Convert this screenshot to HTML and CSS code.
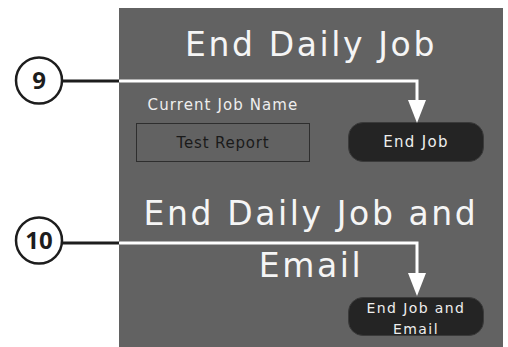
FILE: index.html
```html
<!DOCTYPE html>
<html>
<head>
    <title>End Daily Job</title>
    <link rel="stylesheet" href="styles.css">
</head>
<body>
    <div class="page">
        <div class="panel">
            <h2 class="title">End Daily Job</h2>
            <div class="row">
                <div class="field">
                    <label for="jobName">Current Job Name</label>
                    <div class="jobBox" id="jobName">Test Report</div>
                </div>
                <button class="endButton">End Job</button>
            </div>

            <h2 class="title titleEmail">End Daily Job and<br>Email</h2>
            <div class="row rowEmail">
                <button class="endButton endEmail">End Job and<br>Email</button>
            </div>
        </div>

        <!-- callouts drawn over the screen -->
        <svg class="callouts" width="508" height="347" viewBox="0 0 508 347">
            <g class="callout">
                <line x1="62" y1="81" x2="120" y2="81" class="leadDark" />
                <polyline points="119,81 417,81 417,101" class="leadLight" />
                <polygon points="408,100 426,100 417,123" class="arrowHead" />
                <circle cx="39" cy="80.5" r="23" class="badge" />
                <text x="39" y="89" class="badgeText">9</text>
            </g>
            <g class="callout">
                <line x1="62" y1="243" x2="120" y2="243" class="leadDark" />
                <polyline points="119,243 417,243 417,274" class="leadLight" />
                <polygon points="408,273 426,273 417,296" class="arrowHead" />
                <circle cx="39" cy="240.5" r="23" class="badge" />
                <text x="39" y="249" class="badgeText">10</text>
            </g>
        </svg>
    </div>
</body>
</html>
```

FILE: styles.css
```css
body {
    margin: 0;
    background-color: #fff;
    font-family: "DejaVu Sans", Arial, sans-serif;
}

.page {
    position: relative;
    width: 508px;
    height: 347px;
    overflow: hidden;
}

.panel {
    margin-left: 119px;
    margin-top: 8px;
    width: 384px;
    height: 339px;
    background-color: #626262;
    padding-top: 17px;
    box-sizing: border-box;
    color: #f5f5f5;
}

.title {
    margin: 0;
    text-align: center;
    font-size: 33px;
    font-weight: 400;
    line-height: 40px;
    letter-spacing: 2.6px;
}

.row {
    display: flex;
    justify-content: space-between;
    align-items: flex-end;
    padding: 0 19px 0 17px;
    margin-top: 31px;
}

.field {
    display: flex;
    flex-direction: column;
    align-items: center;
    width: 174px;
}

label {
    font-size: 15px;
    line-height: 18px;
    letter-spacing: 1.1px;
    color: #eee;
}

.jobBox {
    margin-top: 9px;
    width: 100%;
    height: 39px;
    box-sizing: border-box;
    border: 1.5px solid #2e2e2e;
    display: flex;
    align-items: center;
    justify-content: center;
    font-size: 15px;
    font-weight: 400;
    letter-spacing: 0.8px;
    color: #1a1a1a;
}

.endButton {
    width: 136px;
    height: 40px;
    border: 1px solid #3a3a3a;
    border-radius: 15px;
    background-color: #242424;
    color: #eee;
    font-family: "DejaVu Sans", Arial, sans-serif;
    font-size: 15px;
    font-weight: 400;
    letter-spacing: 1.3px;
    padding: 0;
}

.titleEmail {
    margin-top: 26px;
    line-height: 52px;
}

.rowEmail {
    margin-top: 5px;
    justify-content: flex-end;
}

.endEmail {
    height: 39px;
    font-size: 14px;
    line-height: 21px;
    letter-spacing: 1.4px;
}

.callouts {
    position: absolute;
    left: 0;
    top: 0;
}

.leadDark {
    stroke: #1d1d1d;
    stroke-width: 3;
}

.leadLight {
    fill: none;
    stroke: #fff;
    stroke-width: 3;
}

.arrowHead {
    fill: #fff;
}

.badge {
    fill: #fff;
    stroke: #1d1d1d;
    stroke-width: 2.5;
}

.badgeText {
    font-family: "Open Sans", Arial, sans-serif;
    font-size: 24px;
    font-weight: 700;
    fill: #1d1d1d;
    text-anchor: middle;
}
```
